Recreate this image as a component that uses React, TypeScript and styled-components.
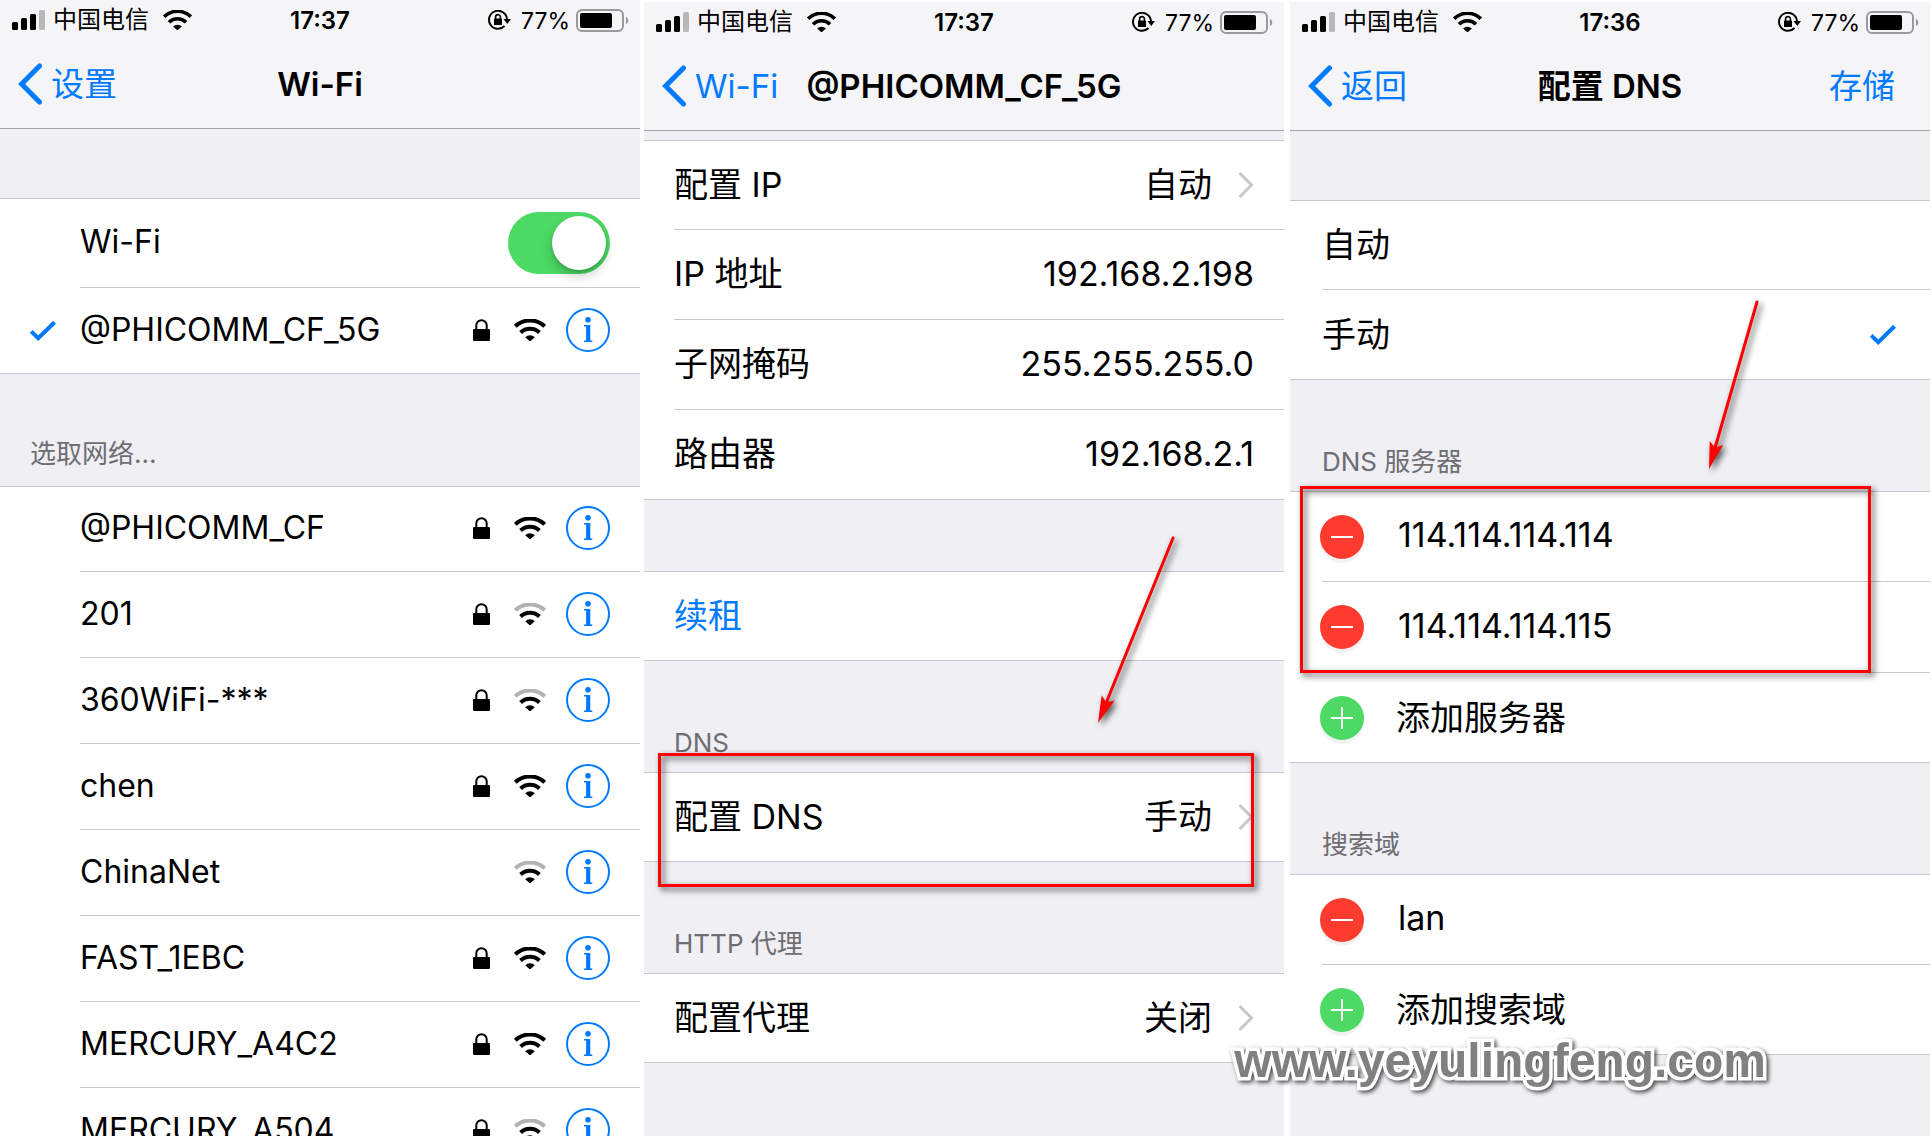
import React from "react";
import styled, { createGlobalStyle } from "styled-components";

const GlobalStyle = createGlobalStyle`
  *, *::before, *::after { box-sizing: border-box; }
  body { margin: 0; background: #fff; color: #000; font-family: Inter, "Noto Sans CJK SC", sans-serif; }
  button, input { font: inherit; color: inherit; padding: 0; margin: 0; border: 0; background: none; }
  h1, h2, ul, p { margin: 0; padding: 0; }
  ul { list-style: none; }
`;

const blue = "#007aff";
const line = "#c8c7cc";

const Page = styled.main`
  position: relative;
  display: flex;
  height: 100vh;
  overflow: hidden;
  padding-right: 2px;
  background: #fff;
`;

const Screen = styled.section<{ $gap?: number }>`
  position: relative;
  flex: 1 1 0;
  min-width: 0;
  margin-left: ${(p) => p.$gap ?? 0}px;
  margin-top: ${(p) => (p.$gap ? 2 : 0)}px;
  background: #efeff4;
`;

const TopBar = styled.header`
  background: #f5f5f7;
  border-bottom: 1px solid #a7a7ab;
`;

const StatusRow = styled.div`
  display: grid;
  grid-template-columns: 1fr auto 1fr;
  align-items: center;
  height: 40px;
  padding: 0 11px;
  font-size: 24px;
  line-height: 36px;
`;

const StatusSide = styled.div<{ $end?: boolean }>`
  display: flex;
  align-items: center;
  justify-content: ${(p) => (p.$end ? "flex-end" : "flex-start")};
  gap: ${(p) => (p.$end ? 6 : 8)}px;
`;

const Carrier = styled.span`
  margin-right: 6px;
`;

const Percent = styled.span`
  margin-left: 4px;
  padding-top: 2px;
  font-size: 23px;
`;

const Clock = styled.time`
  padding-top: 2px;
  font-weight: 600;
`;

const NavRow = styled.div`
  display: grid;
  grid-template-columns: 1fr auto 1fr;
  align-items: center;
  height: 88px;
  padding: 0 18px;
  font-size: 33px;
  line-height: 44px;
`;

const NavButton = styled.button<{ $end?: boolean }>`
  display: flex;
  align-items: center;
  justify-self: ${(p) => (p.$end ? "end" : "start")};
  gap: 8px;
  margin-right: ${(p) => (p.$end ? 17 : 0)}px;
  color: ${blue};
  cursor: pointer;
  white-space: nowrap;
`;

const Title = styled.h1`
  font-size: 33px;
  line-height: 44px;
  font-weight: 600;
  white-space: nowrap;
`;

const Spacer = styled.div<{ $size: number }>`
  height: ${(p) => p.$size}px;
`;

const GroupLabel = styled.h2<{ $low?: boolean; $inset: number }>`
  display: flex;
  align-items: flex-end;
  height: ${(p) => (p.$low ? 111 : 112)}px;
  padding: 0 0 ${(p) => (p.$low ? 13 : 16)}px ${(p) => p.$inset}px;
  font-size: 26px;
  line-height: 32px;
  font-weight: 400;
  color: #6d6d72;
`;

const Group = styled.ul`
  background: #fff;
  border-top: 1px solid ${line};
`;

const Lead = styled.div<{ $width: number }>`
  display: flex;
  align-items: center;
  flex: none;
  width: ${(p) => p.$width}px;
  padding-left: 30px;
`;

const Body = styled.div`
  display: flex;
  align-items: center;
  flex: 1;
  min-width: 0;
  border-bottom: 1px solid ${line};
`;

const RaisedBody = styled(Body)`
  padding-bottom: 2px;
`;

const Row = styled.li<{ $height: number }>`
  display: flex;
  height: ${(p) => p.$height}px;
  font-size: 34px;
  line-height: 44px;
  &:first-child { height: ${(p) => p.$height - 1}px; }
  &:last-child > ${Lead} { border-bottom: 1px solid ${line}; }
`;

const SwitchLabel = styled.label`
  flex: 1;
  padding-bottom: 2px;
  font-size: 32px;
`;

const Switch = styled.input`
  appearance: none;
  width: 102px;
  height: 62px;
  margin-right: 30px;
  border-radius: 31px;
  background: #4cd964;
  display: flex;
  align-items: center;
  justify-content: flex-end;
  padding: 0 4px;
  &::before {
    content: "";
    width: 54px;
    height: 54px;
    border-radius: 50%;
    background: #fff;
    box-shadow: 0 6px 12px rgba(0, 0, 0, 0.2), 0 2px 3px rgba(0, 0, 0, 0.12);
  }
`;

const Network = styled.button`
  display: flex;
  align-items: center;
  flex: 1;
  gap: 24px;
  padding-right: 20px;
  font-size: 32px;
  text-align: left;
  cursor: pointer;
`;

const NetworkName = styled.span`
  flex: 1;
`;

const InfoButton = styled.button`
  display: flex;
  margin-right: 30px;
  cursor: pointer;
`;

const Item = styled.button<{ $tint?: boolean }>`
  display: flex;
  align-items: center;
  flex: 1;
  padding-right: 30px;
  color: ${(p) => (p.$tint ? blue : "#000")};
  text-align: left;
  cursor: pointer;
`;

const Fact = styled.div`
  display: flex;
  flex: 1;
  padding-right: 30px;
`;

const Name = styled.span`
  flex: 1;
`;

const Value = styled.span``;

const LinkValue = styled(Value)`
  margin-right: 26px;
`;

const Choice = styled.label`
  display: flex;
  align-items: center;
  flex: 1;
  padding-right: 34px;
  cursor: pointer;
`;

const Radio = styled.input`
  appearance: none;
  width: 0;
  height: 0;
`;

const Badge = styled.button<{ $add?: boolean }>`
  display: flex;
  align-items: center;
  justify-content: center;
  flex: none;
  width: 44px;
  height: 44px;
  margin: 0 32px 0 -2px;
  border-radius: 50%;
  color: #fff;
  background: ${(p) => (p.$add ? "#4cd964" : "#ff3b30")};
  box-shadow: 0 4px 0 rgba(0, 0, 0, 0.05);
  cursor: pointer;
`;

const Field = styled.input`
  flex: 1;
  min-width: 0;
  height: 48px;
  padding: 0 0 4px 2px;
  font-size: 34px;
  outline: 0;
`;

const Frame = styled.div<{ $x: number; $y: number; $w: number; $h: number }>`
  position: absolute;
  left: ${(p) => p.$x}px;
  top: ${(p) => p.$y}px;
  width: ${(p) => p.$w}px;
  height: ${(p) => p.$h}px;
  border: 3px solid #f00;
  filter: drop-shadow(3px 3px 3px rgba(0, 0, 0, 0.7));
  pointer-events: none;
`;

const ArrowArt = styled.svg<{ $x: number; $y: number }>`
  position: absolute;
  left: ${(p) => p.$x}px;
  top: ${(p) => p.$y}px;
  overflow: visible;
  filter: drop-shadow(3px 3px 3px rgba(0, 0, 0, 0.65));
  pointer-events: none;
`;

const Watermark = styled.p`
  position: absolute;
  right: 166px;
  top: 1035px;
  font-family: "Liberation Sans", sans-serif;
  font-size: 48px;
  line-height: 52px;
  font-weight: 700;
  color: #808080;
  -webkit-text-stroke: 7px #fff;
  paint-order: stroke fill;
  filter: drop-shadow(2px 2px 2px rgba(0, 0, 0, 0.7));
`;

const WifiIcon = ({ width, height, weak }: { width: number; height: number; weak?: boolean }) => (
  <svg width={width} height={height} viewBox="0 0 32 22" preserveAspectRatio="none" fill="none" stroke="#000" strokeWidth="4">
    <path d="M1.3 7.4A21 21 0 0 1 30.7 7.4" stroke={weak ? "#b2b2b2" : "#000"} />
    <path d="M6.6 13.500A13.4 13.4 0 0 1 25.4 13.500" />
    <path d="M11.2 18.200A7 7 0 0 1 20.8 18.200L16 22.500Z" fill="#000" stroke="none" />
  </svg>
);

const SignalIcon = () => (
  <svg width="34" height="20" viewBox="0 0 34 20">
    <rect x="1" y="12" width="6" height="8" rx="1.5" />
    <rect x="10" y="8" width="6" height="12" rx="1.5" />
    <rect x="19" y="4" width="6" height="16" rx="1.5" />
    <rect x="28" y="0" width="6" height="20" rx="1.5" fill="#b8b8ba" />
  </svg>
);

const RotationLockIcon = () => (
  <svg width="23" height="20" viewBox="0 0 23 20" fill="none" stroke="#000" strokeWidth="1.9">
    <path d="M16.500 16A9 9 0 1 1 19 9.5" />
    <path d="M15.500 9h7.500l-3.700 5Z" fill="#000" stroke="none" />
    <path d="M7.6 9V7a2.4 2.4 0 0 1 4.8 0v2" strokeWidth="1.600" />
    <rect x="6" y="8.500" width="8" height="6.500" rx="0.6" fill="#000" stroke="none" />
  </svg>
);

const BatteryIcon = () => (
  <svg width="53" height="23" viewBox="0 0 53 23">
    <rect x="1" y="1" width="46" height="21" rx="5" fill="none" stroke="#9a9a9c" strokeWidth="2" />
    <rect x="4" y="4" width="32" height="15" rx="2" />
    <path d="M50 8c3 1 3 6 0 7Z" fill="#9a9a9c" />
  </svg>
);

const BackIcon = () => (
  <svg width="25" height="42" viewBox="0 0 25 42" fill="none" stroke={blue} strokeWidth="5" strokeLinecap="round">
    <path d="M21.500 3L3.600 21l17.900 18" />
  </svg>
);

const ChevronIcon = () => (
  <svg width="16" height="26" viewBox="0 0 16 26" fill="none" stroke="#c7c7cc" strokeWidth="3">
    <path d="M1.500 1l12 12l-12 12" />
  </svg>
);

const CheckIcon = () => (
  <svg width="26" height="20" viewBox="0 0 26 20" fill="none" stroke={blue} strokeWidth="4">
    <path d="M1.200 10.500l7 6.700L24.600 1.200" />
  </svg>
);

const LockIcon = () => (
  <svg width="17" height="22" viewBox="0 0 17 22">
    <path d="M3.300 11V6.500a5.200 5.200 0 0 1 10.400 0V11" fill="none" stroke="#000" strokeWidth="2" />
    <rect x="0" y="10" width="17" height="12" rx="1" />
  </svg>
);

const InfoIcon = () => (
  <svg width="44" height="44" viewBox="0 0 44 44" fill={blue}>
    <circle cx="22" cy="22" r="21" fill="none" stroke={blue} strokeWidth="2" />
    <circle cx="22" cy="11.700" r="2.800" />
    <path d="M18 17h6.300v15.500h2V34h-8.300v-1.500h2.100V18.500h-2.100Z" />
  </svg>
);

const SignIcon = ({ add }: { add?: boolean }) => (
  <svg width="22" height="22" viewBox="0 0 22 22" stroke="currentColor" strokeWidth="2">
    <path d={add ? "M0 11h22M11 0v22" : "M0 11h22"} />
  </svg>
);

const Arrow = ({ x, y, dx, dy }: { x: number; y: number; dx: number; dy: number }) => {
  const len = Math.hypot(dx, dy);
  const ux = dx / len;
  const uy = dy / len;
  const at = (back: number, side: number) => `${dx - ux * back - uy * side},${dy - uy * back + ux * side}`;
  return (
    <ArrowArt $x={x} $y={y} width="1" height="1" aria-hidden="true">
      <line x1="0" y1="0" x2={dx - ux * 20} y2={dy - uy * 20} stroke="#f00" strokeWidth="3" strokeLinecap="round" />
      <polygon points={`${dx},${dy} ${at(27, 7)} ${at(22, 0)} ${at(27, -7)}`} fill="#f00" />
    </ArrowArt>
  );
};

type HeadProps = { time: string; back: string; title: string; action?: string };

const Head = ({ time, back, title, action }: HeadProps) => (
  <TopBar>
    <StatusRow>
      <StatusSide>
        <SignalIcon />
        <Carrier>中国电信</Carrier>
        <WifiIcon width={29} height={20} />
      </StatusSide>
      <Clock>{time}</Clock>
      <StatusSide $end>
        <RotationLockIcon />
        <Percent>77%</Percent>
        <BatteryIcon />
      </StatusSide>
    </StatusRow>
    <NavRow>
      <NavButton>
        <BackIcon />
        {back}
      </NavButton>
      <Title>{title}</Title>
      {action && <NavButton $end>{action}</NavButton>}
    </NavRow>
  </TopBar>
);

type NetworkProps = { name: string; open?: boolean; weak?: boolean; current?: boolean };

const NetworkRow = ({ name, open, weak, current }: NetworkProps) => (
  <Row $height={86}>
    <Lead $width={80}>{current && <CheckIcon />}</Lead>
    <RaisedBody>
      <Network>
        <NetworkName>{name}</NetworkName>
        {!open && <LockIcon />}
        <WifiIcon width={32} height={22} weak={weak} />
      </Network>
      <InfoButton aria-label={`${name} info`}>
        <InfoIcon />
      </InfoButton>
    </RaisedBody>
  </Row>
);

const LinkRow = ({ name, value }: { name: string; value: string }) => (
  <Row $height={90}>
    <Lead $width={30} />
    <Body>
      <Item>
        <Name>{name}</Name>
        <LinkValue>{value}</LinkValue>
        <ChevronIcon />
      </Item>
    </Body>
  </Row>
);

const FactRow = ({ name, value }: { name: string; value: string }) => (
  <Row $height={90}>
    <Lead $width={30} />
    <RaisedBody>
      <Fact>
        <Name>{name}</Name>
        <Value>{value}</Value>
      </Fact>
    </RaisedBody>
  </Row>
);

const ChoiceRow = ({ name, checked }: { name: string; checked?: boolean }) => (
  <Row $height={90}>
    <Lead $width={32} />
    <Body>
      <Choice>
        <Name>{name}</Name>
        <Radio type="radio" name="dns-mode" defaultChecked={checked} />
        {checked && <CheckIcon />}
      </Choice>
    </Body>
  </Row>
);

const EntryRow = ({ value, label }: { value: string; label: string }) => (
  <Row $height={91}>
    <Lead $width={32} />
    <Body>
      <Badge aria-label={`Remove ${value}`}>
        <SignIcon />
      </Badge>
      <Field type="text" aria-label={label} defaultValue={value} />
    </Body>
  </Row>
);

const AddRow = ({ name }: { name: string }) => (
  <Row $height={90}>
    <Lead $width={32} />
    <Body>
      <Badge $add aria-label={name}>
        <SignIcon add />
      </Badge>
      <Item>{name}</Item>
    </Body>
  </Row>
);

const networks: NetworkProps[] = [
  { name: "@PHICOMM_CF" },
  { name: "201", weak: true },
  { name: "360WiFi-***", weak: true },
  { name: "chen" },
  { name: "ChinaNet", open: true, weak: true },
  { name: "FAST_1EBC" },
  { name: "MERCURY_A4C2" },
  { name: "MERCURY_A504", weak: true },
];

export default function App() {
  return (
    <>
      <GlobalStyle />
      <Page>
        <Screen>
          <Head time="17:37" back="设置" title="Wi-Fi" />
          <Spacer $size={69} />
          <Group>
            <Row $height={90}>
              <Lead $width={80} />
              <Body>
                <SwitchLabel htmlFor="wifi-switch">Wi-Fi</SwitchLabel>
                <Switch id="wifi-switch" type="checkbox" role="switch" defaultChecked />
              </Body>
            </Row>
            <NetworkRow name="@PHICOMM_CF_5G" current />
          </Group>
          <GroupLabel $inset={30}>选取网络...</GroupLabel>
          <Group>
            {networks.map((n) => (
              <NetworkRow key={n.name} {...n} />
            ))}
          </Group>
        </Screen>

        <Screen $gap={4}>
          <Head time="17:37" back="Wi-Fi" title="@PHICOMM_CF_5G" />
          <Spacer $size={9} />
          <Group>
            <LinkRow name="配置 IP" value="自动" />
            <FactRow name="IP 地址" value="192.168.2.198" />
            <FactRow name="子网掩码" value="255.255.255.0" />
            <FactRow name="路由器" value="192.168.2.1" />
          </Group>
          <Spacer $size={71} />
          <Group>
            <Row $height={90}>
              <Lead $width={30} />
              <Body>
                <Item $tint>续租</Item>
              </Body>
            </Row>
          </Group>
          <GroupLabel $low $inset={30}>DNS</GroupLabel>
          <Group>
            <LinkRow name="配置 DNS" value="手动" />
          </Group>
          <GroupLabel $low $inset={30}>HTTP 代理</GroupLabel>
          <Group>
            <LinkRow name="配置代理" value="关闭" />
          </Group>
          <Frame $x={14} $y={751} $w={596} $h={134} />
          <Arrow x={529} y={536} dx={-75} dy={185} />
        </Screen>

        <Screen $gap={6}>
          <Head time="17:36" back="返回" title="配置 DNS" action="存储" />
          <Spacer $size={69} />
          <Group>
            <ChoiceRow name="自动" />
            <ChoiceRow name="手动" checked />
          </Group>
          <GroupLabel $low $inset={32}>DNS 服务器</GroupLabel>
          <Group>
            <EntryRow value="114.114.114.114" label="DNS 服务器 1" />
            <EntryRow value="114.114.114.115" label="DNS 服务器 2" />
            <AddRow name="添加服务器" />
          </Group>
          <GroupLabel $low $inset={32}>搜索域</GroupLabel>
          <Group>
            <EntryRow value="lan" label="搜索域 1" />
            <AddRow name="添加搜索域" />
          </Group>
          <Frame $x={10} $y={484} $w={571} $h={187} />
          <Arrow x={467} y={300} dx={-48} dy={167} />
        </Screen>
        <Watermark>www.yeyulingfeng.com</Watermark>
      </Page>
    </>
  );
}
